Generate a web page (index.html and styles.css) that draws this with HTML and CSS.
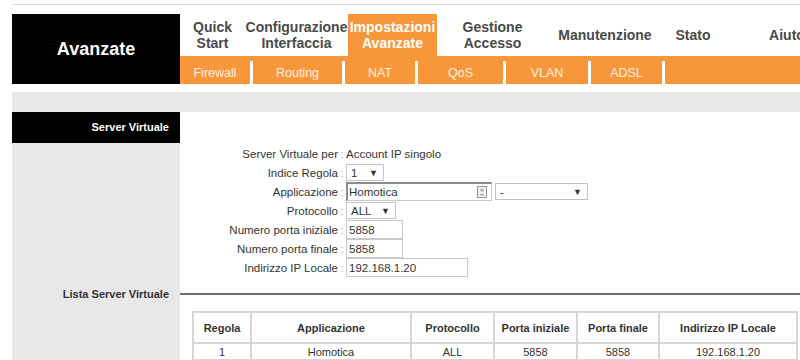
FILE: index.html
```html
<!DOCTYPE html>
<html lang="it">
<head>
  <meta charset="UTF-8" />
  <meta name="viewport" content="width=device-width, initial-scale=1.0"/>
  <title>Server Virtuale</title>
  <link rel="stylesheet" href="styles.css">
</head>
<body>
  <div class="page">
    <div class="topline"></div>

    <header class="header">
      <div class="brand">Avanzate</div>
      <div class="menus">
        <nav class="mainnav">
          <a class="m-quick">Quick<br>Start</a>
          <a class="m-config">Configurazione<br>Interfaccia</a>
          <a class="m-adv active">Impostazioni<br>Avanzate</a>
          <a class="m-access">Gestione<br>Accesso</a>
          <a class="m-maint">Manutenzione</a>
          <a class="m-state">Stato</a>
          <a class="m-help">Aiuto</a>
        </nav>
        <nav class="subnav">
          <a class="s-fw">Firewall</a>
          <a class="s-rt">Routing</a>
          <a class="s-nat">NAT</a>
          <a class="s-qos">QoS</a>
          <a class="s-vlan">VLAN</a>
          <a class="s-adsl">ADSL</a>
          <span class="filler"></span>
        </nav>
      </div>
    </header>

    <div class="band"></div>

    <main class="content">
      <div class="side side-head">Server Virtuale</div>
      <div class="body"></div>

      <div class="side"></div>
      <div class="body form">
        <div class="row">
          <span class="lbl">Server Virtuale per</span><span class="colon">:</span>
          <span class="val">Account IP singolo</span>
        </div>
        <div class="row">
          <span class="lbl">Indice Regola</span><span class="colon">:</span>
          <span class="sel sel-rule">1 <i>▼</i></span>
        </div>
        <div class="row">
          <span class="lbl">Applicazione</span><span class="colon">:</span>
          <span class="txt txt-app">Homotica
            <svg class="book" width="10" height="12" viewBox="0 0 10 12">
              <rect x="0.5" y="0.5" width="9" height="11" fill="#f2f2f2" stroke="#999"/>
              <circle cx="5" cy="4" r="1.6" fill="#aaa"/>
              <path d="M2.5 9.5 Q5 5.5 7.5 9.5 Z" fill="#aaa"/>
            </svg>
          </span>
          <span class="sel sel-app">- <i>▼</i></span>
        </div>
        <div class="row">
          <span class="lbl">Protocollo</span><span class="colon">:</span>
          <span class="sel sel-proto">ALL <i>▼</i></span>
        </div>
        <div class="row">
          <span class="lbl">Numero porta iniziale</span><span class="colon">:</span>
          <span class="txt txt-port">5858</span>
        </div>
        <div class="row">
          <span class="lbl">Numero porta finale</span><span class="colon">:</span>
          <span class="txt txt-port">5858</span>
        </div>
        <div class="row">
          <span class="lbl">Indirizzo IP Locale</span><span class="colon">:</span>
          <span class="txt txt-ip">192.168.1.20</span>
        </div>
      </div>

      <div class="side side-label">Lista Server Virtuale</div>
      <div class="body rule"><div class="line"></div></div>

      <div class="side"></div>
      <div class="body">
        <table class="list">
          <tr>
            <th class="c-rule">Regola</th>
            <th class="c-app">Applicazione</th>
            <th class="c-proto">Protocollo</th>
            <th class="c-start">Porta iniziale</th>
            <th class="c-end">Porta finale</th>
            <th>Indirizzo IP Locale</th>
          </tr>
          <tr>
            <td>1</td>
            <td>Homotica</td>
            <td>ALL</td>
            <td>5858</td>
            <td>5858</td>
            <td>192.168.1.20</td>
          </tr>
        </table>
      </div>
    </main>
  </div>
</body>
</html>
```

FILE: styles.css
```css
:root {
  --orange: #f7963a;
  --panel: #e8e8e8;
  --text: #333;
}

body {
  margin: 0;
  font-family: "Liberation Sans", Arial, sans-serif;
  color: var(--text);
  background: #fff;
  overflow: hidden;
}

.page {
  margin-left: 12px;
  padding-top: 4px;
  width: 788px;
  overflow: hidden;
}

.topline {
  border-top: 1px solid #dcdcdc;
  margin-bottom: 9px;
}

/* header */

.header {
  display: flex;
  height: 70px;
}

.brand {
  width: 168px;
  flex-shrink: 0;
  background: #000;
  color: #fff;
  font-size: 18px;
  font-weight: bold;
  display: flex;
  align-items: center;
  justify-content: center;
}

.menus {
  flex: 1;
  display: flex;
  flex-direction: column;
  overflow: hidden;
}

.mainnav {
  display: flex;
  height: 42px;
}

.mainnav a {
  flex-shrink: 0;
  display: flex;
  align-items: center;
  justify-content: center;
  text-align: center;
  font-size: 14px;
  font-weight: bold;
  line-height: 16px;
  color: #4a4a4a;
  white-space: nowrap;
}

.mainnav a.active {
  background: var(--orange);
  color: #fff;
}

.m-quick { width: 65px; }
.m-config { width: 103px; }
.m-adv { width: 89px; }
.m-access { width: 111px; }
.m-maint { width: 114px; }
.m-state { width: 62px; }
.m-help { width: 126px; }

.subnav {
  display: flex;
  gap: 3px;
  height: 28px;
  padding-top: 5px;
  box-sizing: border-box;
  background: linear-gradient(var(--orange) 5px, #fff 5px);
}

.subnav a,
.subnav .filler {
  flex-shrink: 0;
  background: var(--orange);
  color: #fff3e2;
  font-size: 12.5px;
  display: flex;
  align-items: center;
  justify-content: center;
}

.subnav .filler {
  flex: 1;
}

.s-fw { width: 70px; }
.s-rt { width: 89px; }
.s-nat { width: 70px; }
.s-qos { width: 85px; }
.s-vlan { width: 82px; }
.s-adsl { width: 71px; }

.band {
  margin-top: 8px;
  height: 20px;
  background: var(--panel);
}

/* content */

.content {
  display: grid;
  grid-template-columns: 168px 1fr;
}

.side {
  background: var(--panel);
  font-size: 11px;
  font-weight: bold;
  text-align: right;
  padding-right: 11px;
}

.side-head {
  background: #000;
  color: #fff;
  height: 31px;
  line-height: 31px;
}

.side-label {
  height: 22px;
  line-height: 22px;
  color: #333;
}

.form {
  padding: 1px 0 6px;
  font-size: 11.5px;
}

.row {
  display: flex;
  align-items: center;
  height: 19px;
}

.lbl {
  width: 158px;
  text-align: right;
}

.colon {
  width: 8px;
  text-align: center;
  color: #aaa;
}

.sel {
  display: inline-flex;
  align-items: center;
  justify-content: space-between;
  height: 17px;
  box-sizing: border-box;
  border: 1px solid #c4c4c4;
  padding: 0 5px 0 4px;
  font-size: 11.5px;
}

.sel i {
  font-style: normal;
  font-size: 9px;
}

.sel-rule { width: 38px; }
.sel-proto { width: 50px; }
.sel-app { width: 93px; margin-left: 3px; }

.txt {
  display: inline-flex;
  align-items: center;
  height: 19px;
  box-sizing: border-box;
  border: 1px solid #c8c8c8;
  padding-left: 2px;
  font-size: 11.5px;
}

.txt-app {
  width: 146px;
  border-top: 2px solid #8a8a8a;
  border-left: 2px solid #8a8a8a;
  padding-left: 1px;
}

.txt-app .book {
  margin-left: auto;
  margin-right: 4px;
}

.txt-port { width: 57px; }
.txt-ip { width: 122px; }

.rule {
  display: flex;
  align-items: center;
}

.rule .line {
  flex: 1;
  height: 2px;
  background: #707070;
}

.list {
  margin: 6px 0 0 12px;
  border-collapse: collapse;
  width: 606px;
  font-size: 11px;
  text-align: center;
}

.list th,
.list td {
  border: 2px solid #d6d6d6;
  padding: 0;
}

.list th {
  height: 29px;
  font-weight: bold;
  color: #333;
}

.list td {
  height: 15px;
}

.c-rule { width: 56px; }
.c-app { width: 158px; }
.c-proto { width: 81px; }
.c-start { width: 81px; }
.c-end { width: 80px; }
```
